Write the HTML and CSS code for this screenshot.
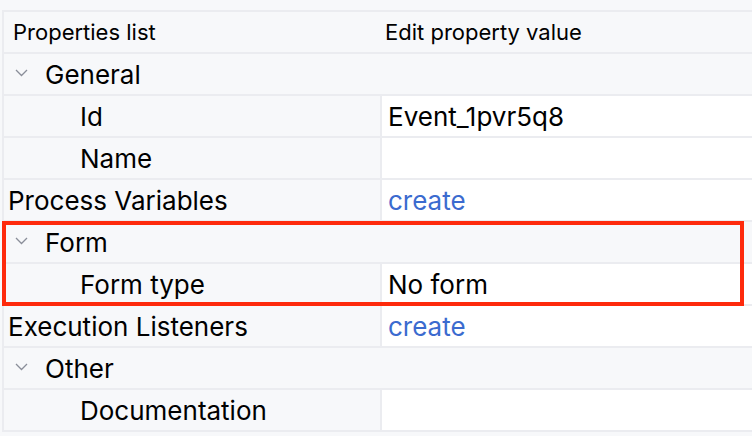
FILE: index.html
```html
<!DOCTYPE html>
<html>
<head>
<meta charset="utf-8">
<link rel="stylesheet" href="styles.css">
</head>
<body>
<div class="table">
  <div class="row head">
    <div class="name">Properties list</div>
    <div class="value">Edit property value</div>
  </div>
  <div class="row group">
    <div class="name"><svg class="chev" viewBox="0 0 13 8" width="13" height="8"><path d="M1 1 L6.5 6.5 L12 1" fill="none" stroke="#8a8e99" stroke-width="1.3"/></svg>General</div>
  </div>
  <div class="row prop">
    <div class="name indent">Id</div>
    <div class="value">Event_1pvr5q8</div>
  </div>
  <div class="row prop">
    <div class="name indent">Name</div>
    <div class="value"></div>
  </div>
  <div class="row prop">
    <div class="name">Process Variables</div>
    <div class="value link">create</div>
  </div>
  <div class="highlight">
    <div class="row group">
      <div class="name"><svg class="chev" viewBox="0 0 13 8" width="13" height="8"><path d="M1 1 L6.5 6.5 L12 1" fill="none" stroke="#8a8e99" stroke-width="1.3"/></svg>Form</div>
    </div>
    <div class="row prop">
      <div class="name indent">Form type</div>
      <div class="value">No form</div>
    </div>
  </div>
  <div class="row prop">
    <div class="name">Execution Listeners</div>
    <div class="value link">create</div>
  </div>
  <div class="row group">
    <div class="name"><svg class="chev" viewBox="0 0 13 8" width="13" height="8"><path d="M1 1 L6.5 6.5 L12 1" fill="none" stroke="#8a8e99" stroke-width="1.3"/></svg>Other</div>
  </div>
  <div class="row prop">
    <div class="name indent">Documentation</div>
    <div class="value"></div>
  </div>
</div>
</body>
</html>
```
FILE: styles.css
```css
html, body {
  margin: 0;
  padding: 0;
  background: #f7f8fa;
  width: 752px;
  height: 436px;
  overflow: hidden;
}
body {
  font-family: Inter, "Noto Sans", sans-serif;
  color: #000;
}
.table {
  margin-top: 10px;
  margin-left: 2px;
  border-left: 2px solid #ebecf0;
  border-top: 2px solid #ebecf0;
}
.row {
  display: grid;
  grid-template-columns: 376px 1fr;
  height: 40px;
  border-bottom: 2px solid #ebecf0;
  font-size: 26px;
}
.row .name,
.row .value {
  display: flex;
  align-items: center;
  white-space: nowrap;
}
.row .name {
  padding-left: 4px;
}
.row .name.indent {
  padding-left: 76px;
}
.row .value {
  padding-left: 6px;
}
.prop .value {
  background: #fff;
  border-left: 2px solid #ebecf0;
}
.head {
  font-size: 22px;
}
.head .name {
  padding-left: 9px;
}
.head .value {
  padding-left: 5px;
}
.group .name {
  padding-left: 11px;
}
.chev {
  margin-right: 17px;
  margin-top: -2px;
}
.link {
  color: #3b6bcf;
}
.highlight {
  position: relative;
}
.highlight::after {
  content: "";
  position: absolute;
  top: -1px;
  left: -2px;
  right: 8px;
  bottom: 0;
  border: 4px solid #fe2a0c;
  pointer-events: none;
}
```
